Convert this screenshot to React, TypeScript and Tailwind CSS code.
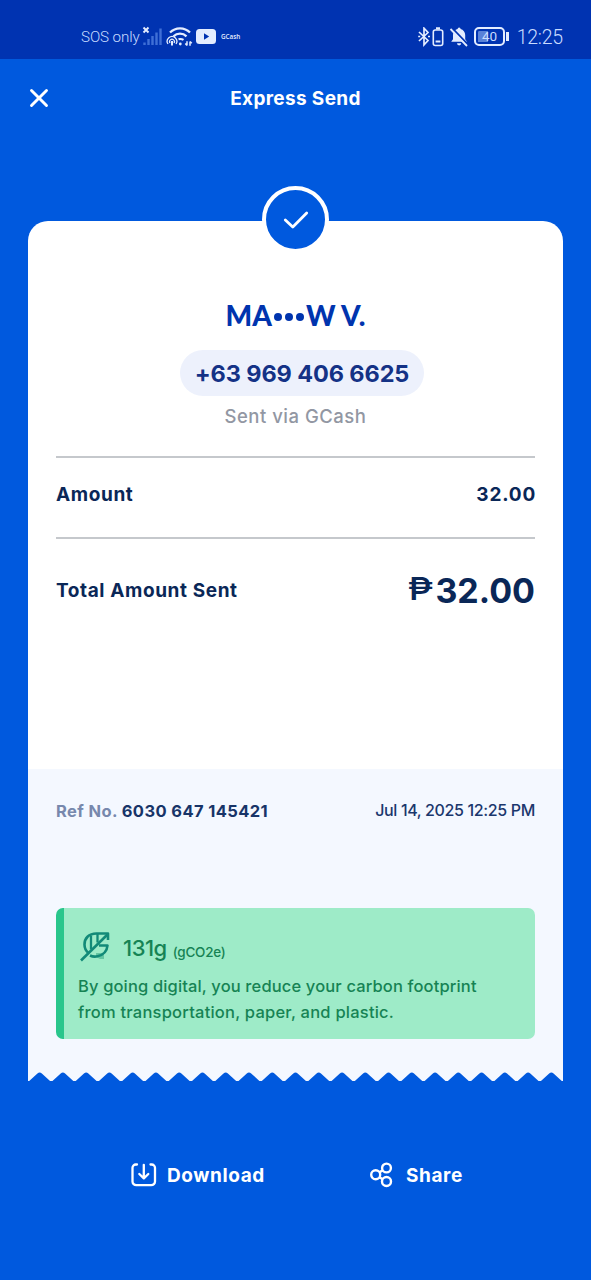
import { X } from 'lucide-react'

const TEETH = 23
const TOOTH = 535 / TEETH

// zigzag edge at the foot of the receipt
function zigzagPath() {
  let d = 'M0 0V10'
  for (let i = 0; i < TEETH; i++) {
    const x = i * TOOTH
    const mid = x + TOOTH / 2
    d += `H${x + 1.2}L${mid - 2.2} 2.4Q${mid} 0.8 ${mid + 2.2} 2.4L${x + TOOTH - 1.2} 10`
  }
  return d + 'H535V0Z'
}

function StatusBar() {
  return (
    <div className="flex h-[59px] items-center justify-between bg-[#0033b1] pt-[15px] pr-7 pl-[81px] text-[#c9dcff]">
      <div className="flex items-center">
        <span className="w-[61px] font-['Roboto',sans-serif] text-[15.2px] font-light tracking-[-0.1px] whitespace-nowrap">
          SOS only
        </span>
        <svg width="20" height="22" viewBox="0 0 20 22" fill="none">
          <path d="M1.5 1.5l5 5M6.5 1.5l-5 5" stroke="#e4edff" strokeWidth="1.9" />
          <path d="M2.5 16.5V19M6.5 13v6M10.5 10v9M14.5 6.5V19M18.5 2.5V19" stroke="#3f6fd6" strokeWidth="2.4" />
        </svg>
        <svg className="ml-1" width="28" height="22" viewBox="0 0 28 22" fill="none" stroke="#e4edff">
          <path d="M4 6.5a14 14 0 0 1 20 0M7.5 10.3a9.4 9.4 0 0 1 13 0" strokeWidth="2.3" />
          <path d="M12.5 13.3a6 6 0 0 1 5 .6" strokeWidth="2.2" />
          <path d="M2 18a4.8 4.8 0 1 1 8 0M4 17a2.4 2.4 0 1 1 4 0" strokeWidth="1.3" />
          <path d="M6 15v4.5" strokeWidth="2" />
          <circle cx="14.3" cy="18" r="1.4" fill="#e4edff" stroke="none" />
          <path d="M21 15.3v4.2M19.3 17.6L21 19.5M24 19.8v-4.3M25.8 17.3L24 15.5" strokeWidth="1.5" />
        </svg>
        <svg className="ml-0.5" width="20" height="16" viewBox="0 0 20 16">
          <rect width="20" height="15" y="0" rx="3.5" fill="#e4edff" />
          <path d="M8 4.3v6.4l5.2-3.2z" fill="#0033b1" />
        </svg>
        <span className="ml-[5px] font-['Open_Sans',sans-serif] text-[6.3px] font-semibold text-[#e4edff]">GCash</span>
      </div>
      <div className="flex items-center">
        <svg width="12" height="20" viewBox="0 0 12 20" fill="none" stroke="#e4edff" strokeWidth="1.7">
          <path d="M1 5l9 8.5-4 4.3V1.2l4 4.3-9 8.5" />
          <path d="M0.2 9.5h2M10 9.5h2" />
        </svg>
        <svg className="ml-0.5" width="12" height="20" viewBox="0 0 12 20" fill="none" stroke="#e4edff" strokeWidth="1.6">
          <rect x="1.3" y="3" width="9.4" height="15.5" rx="2" />
          <path d="M4 1.3h4M3.6 14.5h4.8" strokeWidth="2.2" />
        </svg>
        <svg className="ml-[5px]" width="20" height="20" viewBox="0 0 20 20">
          <path d="M8.6 2a1.5 1.5 0 0 1 3 0c2.7.8 4.6 3 4.6 6v4.3l1.8 2.4H2.2L4 12.3V8c0-3 1.9-5.2 4.6-6z" fill="#e4edff" />
          <path d="M8 16.3h4.2a2.1 2.1 0 0 1-4.2 0z" fill="#e4edff" />
          <path d="M3 1l16.5 17" stroke="#0033b1" strokeWidth="1.8" />
          <path d="M1.5 2L18 19" stroke="#e4edff" strokeWidth="1.8" />
        </svg>
        <div className="mb-0.5 ml-[5px] flex items-center">
          <div className="flex h-[19px] w-[31px] items-center justify-center rounded-[5px] border-2 border-[#e4edff] bg-linear-to-r from-[#5a82d8] from-42% to-transparent to-42% bg-clip-content p-[1.5px] pt-[2px] font-['Roboto',sans-serif] text-[13.5px] leading-none">
            40
          </div>
          <div className="ml-px h-[9px] w-[2.5px] bg-[#e4edff]" />
        </div>
        <span className="ml-2 pt-0.5 font-['Roboto',sans-serif] text-[19.5px] leading-none font-light tracking-[-0.2px]">
          12:25
        </span>
      </div>
    </div>
  )
}

function LeafIcon() {
  return (
    <svg className="-mt-1" width="32" height="32" viewBox="0 0 32 32" fill="none" stroke="#128a78" strokeWidth="2.6" strokeLinejoin="round">
      <path d="M18 23h8v6h-4l-4-2z" fill="#64c6a2" stroke="none" />
      <path d="M3 30.5L30 4" />
      <path d="M30 10V3.5H18.5C10.5 3.5 6.5 8.5 6.5 14.5c0 4 1.5 6.5 4 8.5" />
      <path d="M13 5.5v14M19.5 3.5v9" strokeWidth="2.3" />
      <path d="M12 25.5c2.5 1.2 5 1.4 7.5.8 5.8-1.3 9.5-5.5 10-10.8h-8.5" />
    </svg>
  )
}

function DownloadIcon() {
  return (
    <svg width="26" height="24" viewBox="0 0 26 24" fill="none" stroke="#fff" strokeWidth="2.3" strokeLinecap="round" strokeLinejoin="round">
      <path d="M6 1.5H4.8A3.3 3.3 0 0 0 1.5 4.8v13.6a3.8 3.8 0 0 0 3.8 3.8h14.9a3.8 3.8 0 0 0 3.8-3.8V4.8a3.3 3.3 0 0 0-3.3-3.3h-1.2" />
      <path d="M12.8 1.8v13M8.3 11l4.500 4.300 4.500-4.300" />
    </svg>
  )
}

function ShareIcon() {
  return (
    <svg width="24" height="26" viewBox="0 0 24 26" fill="none" stroke="#fff" strokeWidth="2.4">
      <circle cx="6.7" cy="12.8" r="4.5" />
      <circle cx="17.5" cy="6" r="4.4" />
      <circle cx="17.5" cy="19.5" r="4.5" />
      <path d="M10.5 10.3l3.200-1.900M10.500 15.300l3.200 1.900" />
    </svg>
  )
}

export default function App() {
  return (
    <div className="flex h-[1280px] w-full flex-col overflow-hidden bg-[#0059de] font-['Inter',sans-serif] text-[#0a2757]">
      <StatusBar />

      <header className="grid h-[78px] grid-cols-3 items-center px-[24px] text-white">
        <X size={30} strokeWidth={2.3} />
        <h1 className="pt-0.5 text-center text-[19px] font-bold tracking-[0.35px] whitespace-nowrap">Express Send</h1>
      </header>

      <main className="relative mx-7 mt-[84px] flex h-[851px] shrink-0 flex-col rounded-t-[20px] bg-white">
        {/* success badge over the top edge */}
        <div className="absolute -top-[35px] left-[234px] flex size-[67px] items-center justify-center rounded-full border-4 border-white bg-[#0059de]">
          <svg width="26" height="20" viewBox="0 0 26 20" fill="none" stroke="#fff" strokeWidth="2.8" strokeLinecap="round" strokeLinejoin="round">
            <path d="M2.3 10l7.5 7L23.7 3" />
          </svg>
        </div>

        <section className="flex flex-col items-center pt-[76px]">
          <h2 className="flex h-9 items-center font-['Lato',sans-serif] text-[28px] font-black text-[#0034ae]">
            <span>MA</span>
            <span className="mx-0.5 flex gap-[3px] pt-1">
              <span className="size-[8px] rounded-full bg-[#0034ae]" />
              <span className="size-[8px] rounded-full bg-[#0034ae]" />
              <span className="size-[8px] rounded-full bg-[#0034ae]" />
            </span>
            <span>W V.</span>
          </h2>
          <div className="mt-[17px] ml-[13px] flex h-[46px] w-[244px] items-center justify-center rounded-full bg-[#edf1fc] pt-0.5 text-[23.5px] font-bold tracking-[-0.1px] whitespace-nowrap text-[#143286]">
            +63 969 406 6625
          </div>
          <p className="mt-[6px] text-[18.5px] leading-7 font-medium tracking-[0.5px] text-[#9297a3]">Sent via GCash</p>
        </section>

        <dl className="mx-7 mt-[26px]">
          <div className="flex h-[83px] items-center justify-between border-y-2 border-[#c5c8cc] pb-1 text-[19px] font-bold">
            <dt className="tracking-[0.6px]">Amount</dt>
            <dd className="-mr-px tracking-[0.8px]">32.00</dd>
          </div>
          <div className="flex h-[103px] items-center justify-between">
            <dt className="pt-0.5 text-[19px] font-bold tracking-[0.6px]">Total Amount Sent</dt>
            <dd className="flex items-center text-[34px] font-bold">
              <span className="mr-0.5 inline-block origin-right scale-x-120 pb-0.5 text-[31px] font-medium">₱</span>32.00
            </dd>
          </div>
        </dl>

        <section className="mt-auto h-[302px] bg-[#f4f8ff] px-7 pt-[30px]">
          <div className="flex h-6 items-center justify-between whitespace-nowrap">
            <p className="text-[16.5px] font-bold tracking-[0.4px]">
              <span className="text-[#7788ad]">Ref No.</span> <span className="text-[#173468]">6030 647 145421</span>
            </p>
            <p className="pb-0.5 text-[16px] font-medium tracking-[-0.35px] text-[#1b376d]">Jul 14, 2025 12:25 PM</p>
          </div>

          <div className="mt-[85px] h-[131px] rounded-[7px] border-l-8 border-[#29c68c] bg-[#9eebc8] pt-6 pl-[14px] text-[#168354]">
            <div className="flex h-8 items-center">
              <LeafIcon />
              <span className="ml-[13px] text-[22px] font-medium tracking-[-0.5px]">131g</span>
              <span className="ml-1.5 pt-2 text-[13.5px] font-medium tracking-[-0.25px]">(gCO2e)</span>
            </div>
            <p className="mt-[10px] text-[16.5px] leading-[25.5px] font-medium tracking-[0.14px] whitespace-nowrap">
              By going digital, you reduce your carbon footprint
              <br />
              <span className="tracking-[0.22px]">from transportation, paper, and plastic.</span>
            </p>
          </div>
        </section>

        <svg className="-mb-[10px] block shrink-0" width="535" height="11" viewBox="0 0 535 11">
          <path d={zigzagPath()} fill="#f4f8ff" />
        </svg>
      </main>

      <footer className="mt-[90px] flex h-[26px] items-center pl-[131px] text-[19px] font-bold text-white">
        <button className="flex w-[238px] items-center gap-[10px] tracking-[0.6px]">
          <DownloadIcon />
          <span className="pt-0.5">Download</span>
        </button>
        <button className="flex items-center gap-[13px] tracking-[0.6px]">
          <ShareIcon />
          <span className="pt-0.5">Share</span>
        </button>
      </footer>
    </div>
  )
}
